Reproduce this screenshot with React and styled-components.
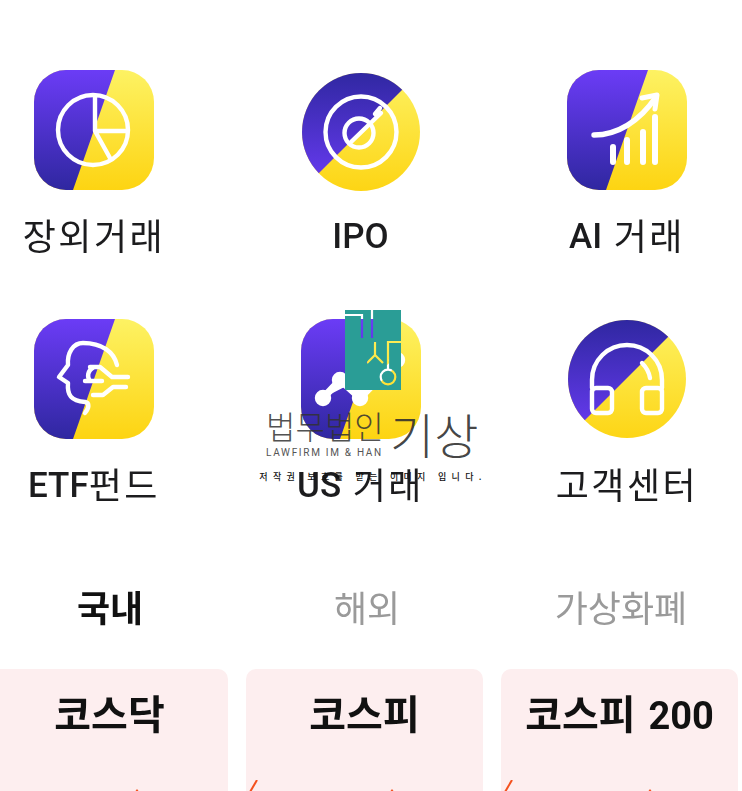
import styled, { createGlobalStyle } from "styled-components";

const GlobalStyle = createGlobalStyle`
html, body {
  margin: 0;
  padding: 0;
  background: #fff;
}
body {
  font-family: Roboto, "Noto Sans CJK KR", sans-serif;
}
`

const Page = styled.div`
position: relative;
width: 742px;
height: 791px;
overflow: hidden;
background: #fff;
`
const MenuGrid = styled.div`
display: grid;
grid-template-columns: repeat(3, 188px);
column-gap: 78.5px;
row-gap: 56px;
padding-top: 70px;
`
const MenuItem = styled.div`
display: flex;
flex-direction: column;
align-items: center;
`
const IconBox = styled.svg`
display: block;
width: 120px;
height: 120px;
overflow: visible;
filter: blur(0.5px);
`
const MenuLabel = styled.div`
margin-top: 23px;
height: 50px;
line-height: 50px;
font-size: 36px;
letter-spacing: 2.5px;
color: #1c1c1e;
white-space: nowrap;
filter: blur(0.4px);
`
const Latin = styled.span`
display: inline-block;
font-size: ${(p) => p.$size || 35}px;
font-weight: ${(p) => p.$weight || 500};
letter-spacing: 0;
margin-left: ${(p) => p.$gap || 0}px;
transform: translateY(${(p) => p.$lift ?? -2}px);
`
const Tabs = styled.div`
display: flex;
margin-top: 76px;
height: 44px;
`
const Tab = styled.div`
width: ${(p) => p.$w}px;
text-align: center;
line-height: 44px;
font-size: 36px;
font-weight: ${(p) => (p.$active ? 700 : 400)};
color: ${(p) => (p.$active ? "#111" : "#9a9a9a")};
filter: blur(0.4px);
`
const CardRow = styled.div`
display: flex;
gap: 18px;
margin: 37px 0 0 -9px;
`
const Card = styled.div`
flex: none;
width: 237px;
height: 200px;
border-radius: 10px;
background: #fdeeef;
padding-top: 22px;
box-sizing: border-box;
`
const CardTitle = styled.div`
text-align: center;
height: 50px;
line-height: 50px;
font-size: 40px;
font-weight: 700;
color: #111;
white-space: nowrap;
filter: blur(0.4px);
`
const Spark = styled.svg`
display: block;
width: 237px;
height: 40px;
margin-top: 39px;
`

/* watermark sits over the menu */
const Watermark = styled.div`
position: absolute;
left: 260px;
top: 310px;
width: 226px;
display: flex;
flex-direction: column;
align-items: center;
pointer-events: none;
`
const WmLogo = styled.svg`
display: block;
width: 56px;
height: 80px;
`
const WmNameRow = styled.div`
display: flex;
align-items: flex-end;
width: 226px;
height: 60px;
margin-top: 10px;
`
const WmNames = styled.div`
display: flex;
flex-direction: column;
margin-left: 6px;
width: 124px;
`
const WmKor = styled.div`
font-family: "Noto Sans CJK KR", sans-serif;
font-size: 32px;
font-weight: 300;
line-height: 32px;
color: rgba(50, 50, 50, 0.85);
white-space: nowrap;
`
const WmEng = styled.div`
font-family: Roboto, sans-serif;
font-size: 10px;
letter-spacing: 1.7px;
line-height: 14px;
margin-top: 5px;
color: #555;
white-space: nowrap;
`
const WmBig = styled.div`
font-family: "Noto Sans CJK KR", sans-serif;
font-size: 48px;
font-weight: 300;
line-height: 54px;
color: rgba(45, 45, 45, 0.9);
white-space: nowrap;
`
const WmNotice = styled.div`
font-family: "Noto Sans CJK KR", sans-serif;
font-size: 9px;
font-weight: 500;
letter-spacing: 5.3px;
line-height: 12px;
margin-top: 11px;
color: #111;
white-space: nowrap;
`

const PURPLE_DOWN = ["#6b3cf6", "#2f27a0"]
const PURPLE_UP = ["#2f27a0", "#6b3cf6"]
const YELLOW = ["#fdf263", "#fdd412"]

const Gradient = ({ id, stops }) => (
    <linearGradient id={id} x1="0" y1="0" x2="0" y2="1">
        <stop offset="0" stopColor={stops[0]} />
        <stop offset="1" stopColor={stops[1]} />
    </linearGradient>
)

const SquareIcon = ({ id, children }) => (
    <IconBox viewBox="0 0 120 120">
        <defs>
            <Gradient id={`${id}p`} stops={PURPLE_DOWN} />
            <Gradient id={`${id}y`} stops={YELLOW} />
            <clipPath id={`${id}c`}>
                <rect width="120" height="120" rx="32" />
            </clipPath>
        </defs>
        <g clipPath={`url(#${id}c)`}>
            <rect width="120" height="120" fill={`url(#${id}y)`} />
            <polygon points="0,0 81,0 39,120 0,120" fill={`url(#${id}p)`} />
        </g>
        <g fill="none" stroke="#fff" strokeWidth="4.4" strokeLinecap="round" strokeLinejoin="round">
            {children}
        </g>
    </IconBox>
)

const RoundIcon = ({ id, cy = 60, children }) => (
    <IconBox viewBox="0 0 120 120">
        <defs>
            <Gradient id={`${id}p`} stops={PURPLE_UP} />
            <Gradient id={`${id}y`} stops={YELLOW} />
            <clipPath id={`${id}c`}>
                <circle cx="60" cy={cy} r="59" />
            </clipPath>
        </defs>
        <g clipPath={`url(#${id}c)`}>
            <rect width="120" height="125" fill={`url(#${id}y)`} />
            <polygon points={`0,0 ${cy + 59},0 0,${cy + 59}`} fill={`url(#${id}p)`} />
        </g>
        <g fill="none" stroke="#fff" strokeWidth="4.4" strokeLinecap="round" strokeLinejoin="round">
            {children}
        </g>
    </IconBox>
)

const menu = [
    {
        label: "장외거래",
        icon: (
            <SquareIcon id="pie">
                <circle cx="59" cy="60" r="35" />
                <path d="M61 27V61H93M61 61L76 88" />
            </SquareIcon>
        ),
    },
    {
        label: <Latin>IPO</Latin>,
        key: "IPO",
        icon: (
            <RoundIcon id="target" cy={62}>
                <circle cx="60" cy="62" r="35.5" />
                <circle cx="58" cy="63" r="14.5" />
                <path d="M50 72L80 43M74 44L79 38" />
            </RoundIcon>
        ),
    },
    {
        label: <><Latin>AI</Latin> 거래</>,
        key: "AI",
        icon: (
            <SquareIcon id="chart">
                <path d="M27 65C50 65 72 52 89 27" strokeWidth="5.4" />
                <path d="M75 28L90 25L88 39" strokeWidth="5" />
                <path d="M46 77V92M60 70V92M76 62V92M88 47V92" strokeWidth="6" />
            </SquareIcon>
        ),
    },
    {
        label: <><Latin>ETF</Latin>펀드</>,
        key: "ETF",
        icon: (
            <SquareIcon id="head">
                <path d="M83 46C80 33 68 24 49 24C39 24 33 34 34 46L25 58L34 64C33 76 37 82 51 83C56 84 55 89 51 94" />
                <path d="M56 48H66L78 58H94M51 62H68M59 76H69L79 68H92M60 48C53 52 53 58 56 62" />
            </SquareIcon>
        ),
    },
    {
        label: <><Latin>US</Latin> 거래</>,
        key: "US",
        icon: (
            <SquareIcon id="net">
                <g fill="#fff" stroke="#fff">
                    <circle cx="22" cy="79" r="6" />
                    <circle cx="39" cy="61" r="6" />
                    <circle cx="59" cy="79" r="6" />
                    <circle cx="96" cy="41" r="6" />
                    <path d="M22 79L39 61L59 79L96 41" strokeWidth="7" />
                </g>
            </SquareIcon>
        ),
    },
    {
        label: "고객센터",
        icon: (
            <RoundIcon id="phones">
                <path d="M25 69V61C25 41 41 26 60 26C79 26 95 41 95 61V69" />
                <rect x="25" y="69" width="20" height="25" rx="4" />
                <rect x="75" y="69" width="20" height="25" rx="4" />
                <path d="M75 44C79 48 82 53 83 59" />
            </RoundIcon>
        ),
    },
]

const tabs = [
    { label: "국내", w: 220, active: true },
    { label: "해외", w: 294 },
    { label: "가상화폐", w: 214 },
]

const cards = [
    { title: "코스닥", tip: 146 },
    { title: "코스피", spike: "M11 0L4 12", tip: 146 },
    { title: <>코스피 <Latin $size={38} $weight={700} $gap={3} $lift={0}>200</Latin></>, key: "200", spike: "M11 0L4 12", tip: 149 },
]

export default function App() {
    return (
        <Page>
            <GlobalStyle />
            <MenuGrid>
                {menu.map((item) => (
                    <MenuItem key={item.key || item.label}>
                        {item.icon}
                        <MenuLabel>{item.label}</MenuLabel>
                    </MenuItem>
                ))}
            </MenuGrid>
            <Tabs>
                {tabs.map((tab) => (
                    <Tab key={tab.label} $w={tab.w} $active={tab.active}>
                        {tab.label}
                    </Tab>
                ))}
            </Tabs>
            <CardRow>
                {cards.map((card) => (
                    <Card key={card.key || card.title}>
                        <CardTitle>{card.title}</CardTitle>
                        <Spark viewBox="0 0 237 40">
                            {card.spike && <path d={card.spike} fill="none" stroke="#f4511e" strokeWidth="2" />}
                            <path
                                d={`M${card.tip - 1.5} 12L${card.tip} 10L${card.tip + 1.5} 12`}
                                fill="none"
                                stroke="#f4511e"
                                strokeWidth="1.2"
                            />
                        </Spark>
                    </Card>
                ))}
            </CardRow>
            <Watermark>
                <WmLogo viewBox="0 0 56 80">
                    <defs>
                        {/* the strokes of the logo are cut out of the teal block */}
                        <mask id="wmCut">
                            <rect width="56" height="80" fill="#fff" />
                            <g fill="none" stroke="#000" strokeWidth="2.2">
                                <path d="M0 5H17V28M27 0V28" />
                                <path d="M30 32V45M22 53L30 45L38 53" />
                                <path d="M56 32H43V60" />
                                <circle cx="43" cy="67" r="7.3" />
                            </g>
                        </mask>
                    </defs>
                    <rect width="56" height="80" fill="#2a9d96" mask="url(#wmCut)" />
                </WmLogo>
                <WmNameRow>
                    <WmNames>
                        <WmKor>법무법인</WmKor>
                        <WmEng>LAWFIRM IM &amp; HAN</WmEng>
                    </WmNames>
                    <WmBig>기상</WmBig>
                </WmNameRow>
                <WmNotice>저작권 보호를 받는 이미지 입니다.</WmNotice>
            </Watermark>
        </Page>
    )
}
